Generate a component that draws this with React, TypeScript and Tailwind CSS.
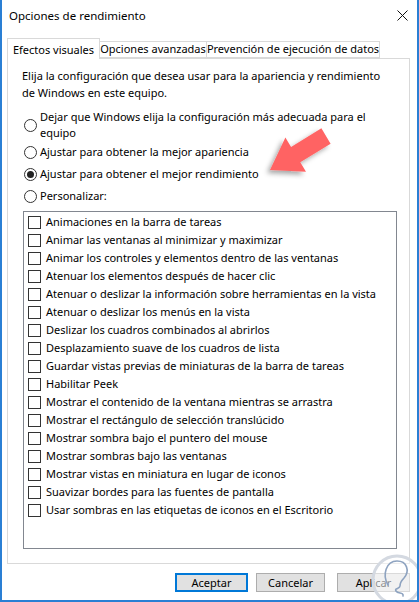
import type { ReactNode } from "react";

const effects = [
  "Animaciones en la barra de tareas",
  "Animar las ventanas al minimizar y maximizar",
  "Animar los controles y elementos dentro de las ventanas",
  "Atenuar los elementos después de hacer clic",
  "Atenuar o deslizar la información sobre herramientas en la vista",
  "Atenuar o deslizar los menús en la vista",
  "Deslizar los cuadros combinados al abrirlos",
  "Desplazamiento suave de los cuadros de lista",
  "Guardar vistas previas de miniaturas de la barra de tareas",
  "Habilitar Peek",
  "Mostrar el contenido de la ventana mientras se arrastra",
  "Mostrar el rectángulo de selección translúcido",
  "Mostrar sombra bajo el puntero del mouse",
  "Mostrar sombras bajo las ventanas",
  "Mostrar vistas en miniatura en lugar de iconos",
  "Suavizar bordes para las fuentes de pantalla",
  "Usar sombras en las etiquetas de iconos en el Escritorio",
];

function Radio(props: Readonly<{ checked?: boolean; children: ReactNode; className?: string }>) {
  return (
    <div className={`flex items-center ${props.className ?? ""}`}>
      <span className="flex h-[13px] w-[13px] shrink-0 items-center justify-center rounded-full border border-[#333] bg-white">
        {props.checked ? <span className="h-[7px] w-[7px] rounded-full bg-[#222]" /> : null}
      </span>
      <span className="ml-[3px] whitespace-nowrap leading-[16px]">{props.children}</span>
    </div>
  );
}

function Btn(props: Readonly<{ label: string; primary?: boolean; w: string }>) {
  const border = props.primary ? "border-2 border-[#0078d7]" : "border border-[#adadad]";
  return (
    <button
      type="button"
      className={`flex h-[19px] items-center justify-center bg-[#e1e1e1] text-[11px] leading-none ${border} ${props.w}`}
    >
      {props.label}
    </button>
  );
}

export default function App() {
  return (
    <div className="relative h-[602px] w-[419px] overflow-hidden border-x-2 border-b-2 border-[#2a7fd4] bg-white font-['Noto_Sans',sans-serif] text-[11px] text-black">
      <div className="flex h-[31px] items-center justify-between pl-[7px] pr-[7px]">
        <span className="text-[11.5px]">Opciones de rendimiento</span>
        <svg width="11" height="11" viewBox="0 0 11 11" className="mr-[2px]">
          <path d="M0.5 0.5L10.5 10.5M10.5 0.5L0.5 10.5" stroke="#111" strokeWidth="1" />
        </svg>
      </div>

      <div className="ml-[5px] mt-[7px] flex items-end whitespace-nowrap">
        <div className="relative z-10 -mb-px flex h-[21px] w-[93px] items-start justify-center border border-b-0 border-[#d9d9d9] bg-white pt-[3px]">
          Efectos visuales
        </div>
        <div className="flex h-[17px] w-[107px] items-center justify-center border border-l-0 border-[#d9d9d9] bg-white">
          Opciones avanzadas
        </div>
        <div className="flex h-[17px] w-[173px] items-center justify-center border border-l-0 border-[#d9d9d9] bg-white">
          Prevención de ejecución de datos
        </div>
      </div>

      <div className="ml-[5px] h-[506px] w-[403px] border border-[#d9d9d9] bg-white px-[14px] pt-[8px]">
        <p className="whitespace-nowrap leading-[17px]">
          Elija la configuración que desea usar para la apariencia y rendimiento
          <br />
          de Windows en este equipo.
        </p>
        <div className="ml-[2px] mt-[8px]">
          <Radio>
            Dejar que Windows elija la configuración más adecuada para el
            <br />
            equipo
          </Radio>
          <Radio className="mt-[3px]">Ajustar para obtener la mejor apariencia</Radio>
          <Radio checked className="mt-[6px]">
            Ajustar para obtener el mejor rendimiento
          </Radio>
          <Radio className="mt-[6px]">Personalizar:</Radio>
        </div>

        <div className="ml-px mt-[7px] h-[338px] w-[374px] border border-[#828790] bg-white pl-[4px] pt-px">
          {effects.map((e) => (
            <div key={e} className="flex h-[18px] items-center">
              <span className="h-[13px] w-[13px] shrink-0 border border-[#333] bg-white" />
              <span className="ml-[5px] whitespace-nowrap">{e}</span>
            </div>
          ))}
        </div>
      </div>

      <div className="mt-[9px] flex justify-end pr-[7px]">
        <Btn label="Aceptar" primary w="w-[73px]" />
        <div className="ml-[8px]">
          <Btn label="Cancelar" w="w-[69px]" />
        </div>
        <div className="ml-[12px]">
          <Btn label="Aplicar" w="w-[73px]" />
        </div>
      </div>

      {/* red arrow overlay */}
      <svg className="pointer-events-none absolute left-0 top-0" width="419" height="602">
        <defs>
          <filter id="sh" x="-50%" y="-50%" width="200%" height="200%">
            <feDropShadow dx="-3" dy="3" stdDeviation="2.5" floodColor="#000" floodOpacity="0.35" />
          </filter>
        </defs>
        <polygon
          points="319.4,128.3 328.6,143.7 298.3,162.3 304,171.7 268,170 283.4,137.5 289.1,146.9"
          fill="#ff6464"
          filter="url(#sh)"
        />
      </svg>

      {/* watermark logo */}
      <svg className="pointer-events-none absolute left-[368px] top-[553px]" width="52" height="52" viewBox="0 0 52 52">
        <circle cx="27" cy="27" r="24" fill="#ffffff" fillOpacity="0.55" stroke="#d4d9e1" strokeWidth="3" />
        <path
          d="M18 32 C12 22 16 8 27 8 C37 8 40 18 34 25 C31 28 30 30 30 33 C30 36 24 35 26 38 C28 41 34 39 33 43"
          fill="none"
          stroke="#8ea3c0"
          strokeWidth="1.6"
          strokeLinecap="round"
        />
      </svg>
    </div>
  );
}
